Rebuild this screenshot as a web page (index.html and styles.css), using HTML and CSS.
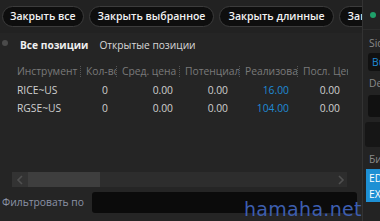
FILE: index.html
```html
<!DOCTYPE html>
<html lang="ru">
<head>
<meta charset="utf-8">
<link rel="stylesheet" href="styles.css">
</head>
<body>
<div class="app">
  <div class="main">
    <div class="toolbar">
      <button class="pill first">Закрыть все</button>
      <button class="pill">Закрыть выбранное</button>
      <button class="pill">Закрыть длинные</button>
      <button class="pill">Закрыть короткие</button>
    </div>
    <div class="tabs">
      <span class="dot"></span>
      <span class="tab active">Все позиции</span>
      <span class="tab">Открытые позиции</span>
    </div>
    <div class="grid">
      <div class="row head">
        <span class="c c1">Инструмент</span>
        <span class="c c2">Кол-во</span>
        <span class="c c3">Сред. цена</span>
        <span class="c c4">Потенциальный</span>
        <span class="c c5">Реализованный</span>
        <span class="c c6">Посл. Цена</span>
      </div>
      <div class="row">
        <span class="c c1">RICE~US</span>
        <span class="c c2 num">0</span>
        <span class="c c3 num">0.00</span>
        <span class="c c4 num">0.00</span>
        <span class="c c5 num blue">16.00</span>
        <span class="c c6 num">0.00</span>
      </div>
      <div class="row">
        <span class="c c1">RGSE~US</span>
        <span class="c c2 num">0</span>
        <span class="c c3 num">0.00</span>
        <span class="c c4 num">0.00</span>
        <span class="c c5 num blue">104.00</span>
        <span class="c c6 num">0.00</span>
      </div>
    </div>
    <div class="spacer"></div>
    <div class="hscroll">
      <span class="arrow"><svg width="8" height="10" viewBox="0 0 8 10"><path d="M6 1 L2 5 L6 9" fill="none" stroke="#505050" stroke-width="1.6"/></svg></span>
      <span class="thumb"></span>
      <span class="track"></span>
      <span class="arrow right"><svg width="8" height="10" viewBox="0 0 8 10"><path d="M2 1 L6 5 L2 9" fill="none" stroke="#505050" stroke-width="1.6"/></svg></span>
    </div>
    <div class="filter">
      <span class="flabel">Фильтровать по</span>
      <span class="finput"></span>
    </div>
  </div>
  <div class="side">
    <div class="side-in">
      <div class="side-top"><span class="gdot"></span></div>
      <div class="slabel first">Side</div>
      <div class="sbox"><span class="bluetxt">Buy</span></div>
      <div class="slabel">Destination</div>
      <div class="sbox tall"></div>
      <div class="sbox dark"></div>
      <div class="slabel">Биржа</div>
      <div class="slist">
        <div>EDGX</div>
        <div>EXCH</div>
      </div>
    </div>
  </div>
</div>
<div class="site-tag">hamaha.net</div>
</body>
</html>
```
FILE: styles.css
```css
* { box-sizing: border-box; }
html, body {
  margin: 0;
  padding: 0;
  width: 380px;
  height: 221px;
  overflow: hidden;
  background: #252525;
  font-family: "Open Sans", "Noto Sans", sans-serif;
  font-size: 10.3px;
}
.app {
  display: flex;
  width: 380px;
  height: 221px;
}
.main {
  width: 362px;
  height: 221px;
  display: flex;
  flex-direction: column;
  overflow: hidden;
}
.toolbar {
  height: 33px;
  padding: 6px 0 0 2px;
  display: flex;
  gap: 5px;
  white-space: nowrap;
  background: #222;
}
.pill {
  flex: none;
  height: 21px;
  padding: 0 8px;
  border-radius: 11px;
  border: 1px solid #3c3c3c;
  background: #0e0e0e;
  color: #f2f2f2;
  font-family: "Open Sans", sans-serif;
  font-weight: 600;
  font-size: 10.5px;
  line-height: 19px;
}
.pill.first { padding: 0 7px; }
.tabs {
  height: 24px;
  display: flex;
  align-items: center;
  padding-left: 2px;
}
.dot {
  width: 6px;
  height: 6px;
  border-radius: 50%;
  background: #4b4b4b;
  margin-right: 12px;
  align-self: flex-start;
  margin-top: 7px;
}
.tab {
  color: #d8d8d8;
  margin-right: 11px;
  font-size: 10.2px;
}
.tab.active {
  font-weight: 700;
  color: #f0f0f0;
}
.grid {
  margin-top: 6px;
  padding-left: 12px;
}
.row {
  display: flex;
  height: 18px;
  align-items: center;
  color: #cfcfcf;
  white-space: nowrap;
}
.row.head {
  height: 16px;
  color: #7a7a7a;
  margin-bottom: 2px;
}
.c {
  overflow: hidden;
  padding-left: 5px;
}
.head .c { border-right: 1px dotted #555; line-height: 11px; }
.head .c6 { border-right: none; }
.c1 { width: 69px; }
.c2 { width: 36px; }
.c3 { width: 63px; }
.c4 { width: 60px; }
.c5 { width: 58px; }
.c6 { width: 50px; }
.num { text-align: right; }
.row .c2.num { padding-right: 9px; }
.row .c3.num { padding-right: 7px; }
.row .c4.num { padding-right: 12px; }
.row .c5.num { padding-right: 9px; }
.row .c6.num { padding-right: 8px; }
.blue { color: #1f8ad6; }
.spacer { flex: 1; }
.hscroll {
  height: 15px;
  margin-left: 12px;
  width: 335px;
  display: flex;
  background: #2d2d2d;
}
.arrow {
  width: 16px;
  display: flex;
  align-items: center;
  justify-content: center;
  background: #333;
}
.arrow.right { width: 12px; background: #2d2d2d; }
.thumb {
  width: 72px;
  background: #3e3e3e;
}
.track { flex: 1; }
.filter {
  height: 34px;
  display: flex;
  align-items: flex-start;
  padding-top: 5px;
}
.flabel {
  width: 92px;
  padding-left: 2px;
  color: #8b93a6;
  line-height: 21px;
}
.finput {
  width: 265px;
  height: 21px;
  background: #0b0b0b;
  border-radius: 3px;
}
.side {
  width: 18px;
  border-left: 1px solid #333;
  background: #232323;
  overflow: hidden;
}
.side-in {
  width: 100px;
}
.side-top {
  height: 30px;
  border-bottom: 1px solid #2c2c2c;
  padding: 12px 0 0 7px;
}
.gdot {
  display: block;
  width: 6px;
  height: 6px;
  border-radius: 50%;
  background: #1fa06a;
}
.slabel {
  color: #8a8a8a;
  height: 16px;
  line-height: 16px;
  padding-left: 6px;
  margin-top: 4px;
}
.slabel.first { margin-top: 5px; }
.sbox {
  margin: 2px 0 0 5px;
  height: 18px;
  background: #111;
  border-radius: 3px;
  padding-left: 4px;
  line-height: 18px;
}
.sbox.tall { height: 22px; margin-top: 4px; }
.sbox.dark { height: 25px; margin-left: 2px; margin-top: 5px; background: #161616; }
.bluetxt { color: #1f8ad6; }
.slist {
  margin: 2px 0 0 3px;
  background: #1e90d4;
  color: #fff;
  padding: 1px 0 0 3px;
  height: 33px;
}
.slist div { line-height: 16px; }
.site-tag {
  position: absolute;
  left: 244px;
  top: 198px;
  white-space: nowrap;
  font-family: "DejaVu Sans", sans-serif;
  font-size: 19px;
  color: #3d5eaf;
  line-height: 22px;
  letter-spacing: 0.3px;
}
```
